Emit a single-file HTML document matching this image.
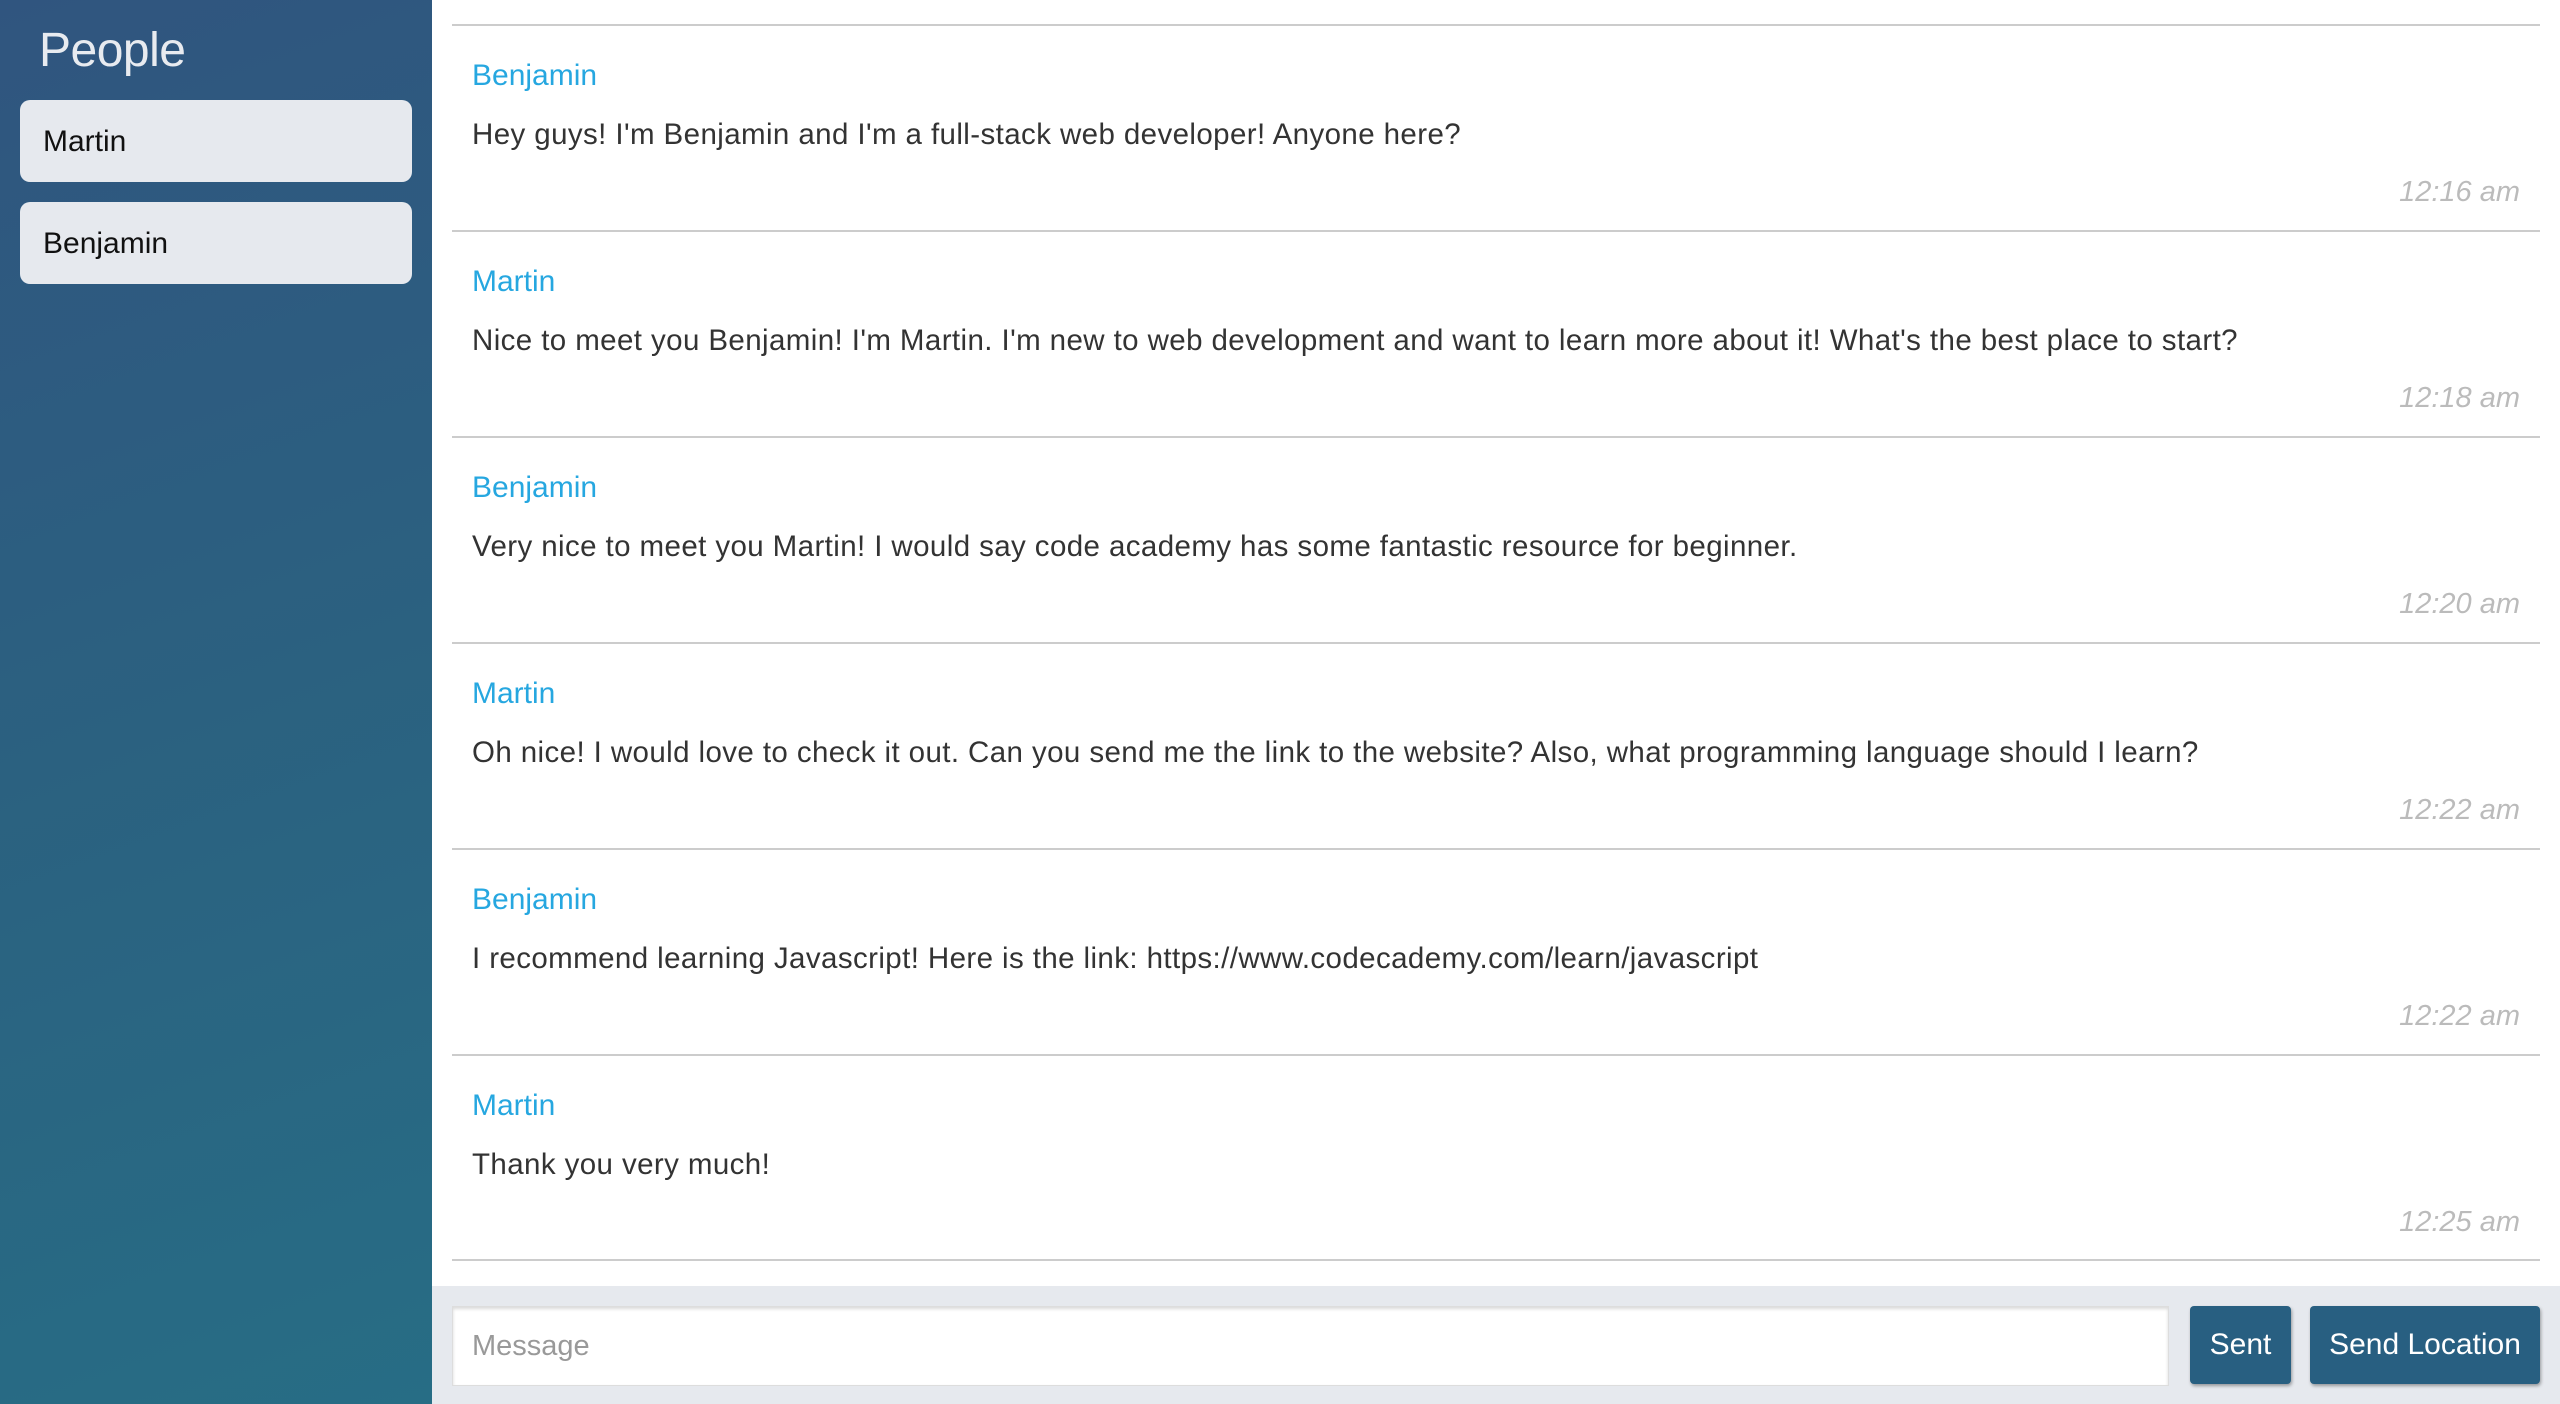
<!DOCTYPE html>
<html><head><meta charset="utf-8"><style>
*{margin:0;padding:0;box-sizing:border-box}
body{width:2560px;height:1404px;overflow:hidden;font-family:"Liberation Sans",sans-serif;background:#fff;position:relative}
.side{position:absolute;left:0;top:0;width:432px;height:1404px;background:linear-gradient(160deg,#30557f 0%,#2b6180 50%,#276d85 100%)}
.side h3{position:absolute;left:39px;top:23px;font-size:48px;font-weight:normal;color:#e8ebf0;letter-spacing:-0.5px}
.card{position:absolute;left:20px;width:392px;height:82px;background:#e6e9ee;border-radius:10px;font-size:30px;color:#111;padding-left:23px;line-height:84px}
.msg{position:absolute;left:452px;width:2088px;height:206px;border-top:2px solid #ccc}
.name{position:absolute;left:20px;top:33px;font-size:30px;color:#26a7e0}
.text{position:absolute;left:20px;top:92px;font-size:29.5px;color:#333;letter-spacing:0.4px;white-space:nowrap}
.time{position:absolute;right:20px;top:150px;font-size:29px;color:#bbb;font-style:italic}
.foot{position:absolute;left:432px;top:1286px;width:2128px;height:118px;background:#e6e9ee}
.inp{position:absolute;left:452px;top:1306px;width:1717px;height:80px;background:#fff;border:1px solid #ddd;box-shadow:inset 0 2px 3px rgba(0,0,0,.15);font-size:29px;color:#999;padding-left:19px;line-height:78px}
.btn{position:absolute;top:1306px;height:78px;background:#285f81;color:#fff;font-size:30px;line-height:78px;text-align:center;border-radius:4px;box-shadow:1px 2px 3px rgba(0,0,0,.35)}
</style></head><body>
<div class="side"><h3>People</h3>
<div class="card" style="top:100px">Martin</div>
<div class="card" style="top:202px">Benjamin</div></div>
<div class="msg" style="top:24px"><div class="name">Benjamin</div><div class="text">Hey guys! I'm Benjamin and I'm a full-stack web developer! Anyone here?</div><div class="time">12:16 am</div></div>
<div class="msg" style="top:230px"><div class="name">Martin</div><div class="text">Nice to meet you Benjamin! I'm Martin. I'm new to web development and want to learn more about it! What's the best place to start?</div><div class="time">12:18 am</div></div>
<div class="msg" style="top:436px"><div class="name">Benjamin</div><div class="text">Very nice to meet you Martin! I would say code academy has some fantastic resource for beginner.</div><div class="time">12:20 am</div></div>
<div class="msg" style="top:642px"><div class="name">Martin</div><div class="text">Oh nice! I would love to check it out. Can you send me the link to the website? Also, what programming language should I learn?</div><div class="time">12:22 am</div></div>
<div class="msg" style="top:848px"><div class="name">Benjamin</div><div class="text">I recommend learning Javascript! Here is the link: https://www.codecademy.com/learn/javascript</div><div class="time">12:22 am</div></div>
<div class="msg" style="top:1054px"><div class="name">Martin</div><div class="text">Thank you very much!</div><div class="time">12:25 am</div></div>
<div class="msg" style="top:1259px;height:2px"></div>
<div class="foot"></div>
<div class="inp">Message</div>
<div class="btn" style="left:2190px;width:101px">Sent</div>
<div class="btn" style="left:2310px;width:230px">Send Location</div>
</body></html>
